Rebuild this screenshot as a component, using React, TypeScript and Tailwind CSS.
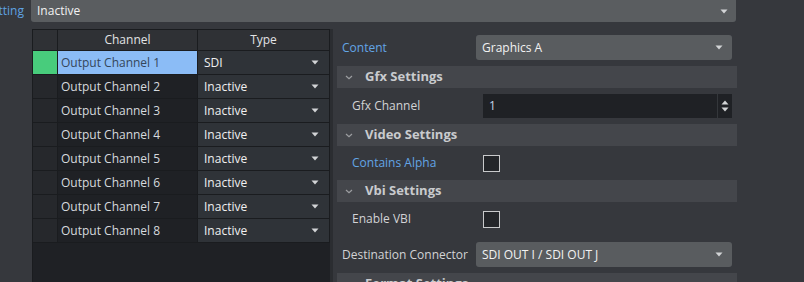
const channels = [1, 2, 3, 4, 5, 6, 7, 8];

const Arrow = ({ className = "" }: { className?: string }) => (
  <svg width="8" height="5" viewBox="0 0 8 5" className={className}>
    <path d="M0.5 0.5 L7.5 0.5 L4 4.5 Z" fill="#d2d4d6" />
  </svg>
);

const Chevron = () => (
  <svg width="8" height="5" viewBox="0 0 8 5" className="ml-[8px]">
    <path d="M1 1 L4 3.8 L7 1" fill="none" stroke="#9c9ea1" strokeWidth="1.2" />
  </svg>
);

const SectionHeader = ({ title }: { title: string }) => (
  <div className="flex h-[22px] shrink-0 items-center bg-[#44464b]">
    <Chevron />
    <span className="ml-[12px] text-[13px] font-bold text-[#c9cbce]">{title}</span>
  </div>
);

const Select = ({ value, width }: { value: string; width: string }) => (
  <div className={`flex h-full items-center justify-between rounded-[3px] bg-[#595c5f] pl-[6px] pr-[9px] text-[#f2f2f2] ${width}`}>
    <span>{value}</span>
    <Arrow />
  </div>
);

const Checkbox = () => (
  <div className="h-[17px] w-[17px] border border-[#c8c9cb] bg-[#232529]" />
);

export default function App() {
  return (
    <div className="flex h-[282px] w-[804px] flex-col overflow-hidden bg-[#36383d] text-[12px] [font-family:'Open_Sans',sans-serif]">
      <div className="flex h-[22px] shrink-0">
        <div className="flex w-[31px] items-center justify-end overflow-hidden pr-[7px] text-[#5fa2e2]">
          <span className="whitespace-nowrap">Setting</span>
        </div>
        <div className="flex w-[705px] items-center justify-between rounded-b-[3px] bg-[#5a5d60] pl-[6px] pr-[8px] text-[#f2f2f2]">
          <span>Inactive</span>
          <Arrow />
        </div>
      </div>

      <div className="flex min-h-0 flex-1">
        <div className="flex w-[333px] shrink-0 pl-[32px] pt-[7px]">
          <div className="flex w-[298px] flex-col bg-[#1f2125]">
            <div className="grid grid-cols-[24px_139px_131px] gap-px bg-[#1a1c1f] p-px">
              <div className="h-[20px] bg-[#2f3135]" />
              <div className="flex h-[20px] items-center justify-center bg-[#2f3135] text-[#e2e3e5]">Channel</div>
              <div className="flex h-[20px] items-center justify-center bg-[#2f3135] text-[#e2e3e5]">Type</div>
              {channels.map((n) => (
                <div key={n} className="contents">
                  <div className={n === 1 ? "h-[23px] bg-[#48cc7c]" : "h-[23px] bg-[#26282c]"} />
                  <div
                    className={
                      n === 1
                        ? "flex h-[23px] items-center bg-[#8bbcf6] pl-[3px] text-[#34465a]"
                        : "flex h-[23px] items-center bg-[#1f2125] pl-[3px] text-[#d6dade]"
                    }
                  >
                    Output Channel {n}
                  </div>
                  <div className="flex h-[23px] items-center justify-between bg-[#2f3338] pl-[6px] pr-[10px] text-[#f0f0f0]">
                    <span>{n === 1 ? "SDI" : "Inactive"}</span>
                    <Arrow />
                  </div>
                </div>
              ))}
            </div>
            <div className="flex-1 border-l border-[#1a1c1f]" />
          </div>
          <div className="w-[3px] bg-[#2b2d31]" />
        </div>

        <div className="ml-[4px] flex w-[400px] shrink-0 flex-col gap-[6px] pt-[13px]">
          <div className="flex h-[25px] shrink-0 items-center pl-[5px]">
            <span className="w-[134px] text-[#63a5e6]">Content</span>
            <Select value="Graphics A" width="w-[256px]" />
          </div>

          <SectionHeader title="Gfx Settings" />
          <div className="flex h-[24px] shrink-0 items-center pl-[15px]">
            <span className="w-[131px] text-[#d2d3d5]">Gfx Channel</span>
            <div className="flex h-full w-[249px] items-center justify-between bg-[#1f2125]">
              <span className="pl-[6px] text-[#c4d6ea]">1</span>
              <div className="flex h-full w-[15px] flex-col items-center justify-center gap-[2px] border-l border-[#34373b]">
                <svg width="8" height="5" viewBox="0 0 8 5">
                  <path d="M0.5 4.5 L7.5 4.5 L4 0.5 Z" fill="#d2d4d6" />
                </svg>
                <svg width="8" height="5" viewBox="0 0 8 5">
                  <path d="M0.5 0.5 L7.5 0.5 L4 4.5 Z" fill="#d2d4d6" />
                </svg>
              </div>
            </div>
          </div>

          <SectionHeader title="Video Settings" />
          <div className="flex h-[22px] shrink-0 items-center pl-[15px]">
            <span className="w-[131px] text-[#63a5e6]">Contains Alpha</span>
            <Checkbox />
          </div>

          <SectionHeader title="Vbi Settings" />
          <div className="flex h-[22px] shrink-0 items-center pl-[15px]">
            <span className="w-[131px] text-[#d2d3d5]">Enable VBI</span>
            <Checkbox />
          </div>

          <div className="mt-[6px] flex h-[25px] shrink-0 items-center pl-[5px]">
            <span className="w-[134px] whitespace-nowrap text-[#d2d3d5]">Destination Connector</span>
            <Select value="SDI OUT I / SDI OUT J" width="w-[256px]" />
          </div>

          <SectionHeader title="Format Settings" />
        </div>
      </div>
    </div>
  );
}
